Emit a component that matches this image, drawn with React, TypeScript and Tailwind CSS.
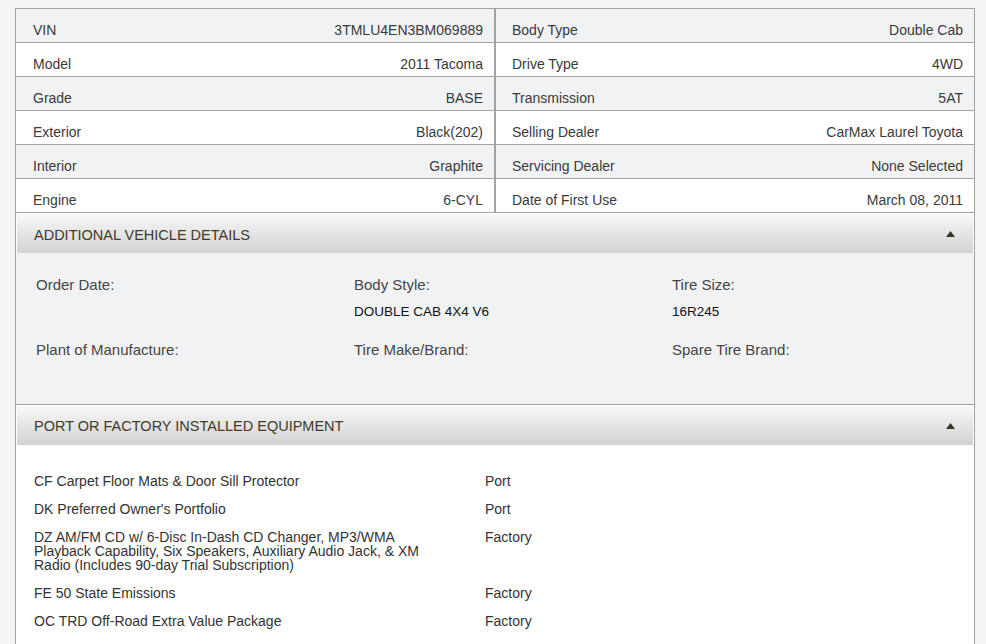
const leftRows = [
  ["VIN", "3TMLU4EN3BM069889"],
  ["Model", "2011 Tacoma"],
  ["Grade", "BASE"],
  ["Exterior", "Black(202)"],
  ["Interior", "Graphite"],
  ["Engine", "6-CYL"],
];

const rightRows = [
  ["Body Type", "Double Cab"],
  ["Drive Type", "4WD"],
  ["Transmission", "5AT"],
  ["Selling Dealer", "CarMax Laurel Toyota"],
  ["Servicing Dealer", "None Selected"],
  ["Date of First Use", "March 08, 2011"],
];

const details = [
  { label: "Order Date:", value: "" },
  { label: "Body Style:", value: "DOUBLE CAB 4X4 V6" },
  { label: "Tire Size:", value: "16R245" },
  { label: "Plant of Manufacture:", value: "" },
  { label: "Tire Make/Brand:", value: "" },
  { label: "Spare Tire Brand:", value: "" },
];

const equipment = [
  ["CF Carpet Floor Mats & Door Sill Protector", "Port"],
  ["DK Preferred Owner's Portfolio", "Port"],
  [
    "DZ AM/FM CD w/ 6-Disc In-Dash CD Changer, MP3/WMA Playback Capability, Six Speakers, Auxiliary Audio Jack, & XM Radio (Includes 90-day Trial Subscription)",
    "Factory",
  ],
  ["FE 50 State Emissions", "Factory"],
  ["OC TRD Off-Road Extra Value Package", "Factory"],
];

function SpecColumn({ rows, side }: { rows: string[][]; side: "left" | "right" }) {
  return (
    <div
      className={
        side === "left"
          ? "w-[479px] border-r border-[#a3a3a3]"
          : "flex-1 border-l border-[#a3a3a3]"
      }
    >
      {rows.map(([label, value], i) => (
        <div
          key={label}
          className={`flex h-[34px] justify-between border-b border-[#a3a3a3] pt-[13px] pr-[11px] text-[14px] leading-[16px] text-[#3a3a3a] ${
            side === "left" ? "pl-[17px]" : "pl-[16px]"
          } ${i % 2 === 0 ? "bg-[#f1f2f3]" : "bg-white"}`}
        >
          <span>{label}</span>
          <span>{value}</span>
        </div>
      ))}
    </div>
  );
}

function SectionHeader({ title, lower }: { title: string; lower?: boolean }) {
  return (
    <div
      className={`mx-[1px] mt-[1px] flex h-[39px] items-center justify-between bg-linear-to-b from-[#f8f8f8] to-[#d2d2d2] pl-[17px] pr-[18px] ${
        lower ? "pt-[5px]" : "pt-[2px]"
      }`}
    >
      <span className="text-[14.5px] uppercase text-[#403b2a]">{title}</span>
      <svg width="9" height="6" viewBox="0 0 9 6" className={lower ? "-mt-[5px]" : "-mt-[2px]"}>
        <path d="M0 6 L4.5 0 L9 6 Z" fill="#38331f" />
      </svg>
    </div>
  );
}

export default function App() {
  return (
    <div
      className="min-h-screen bg-[#f4f4f4] pt-[8px]"
      style={{ fontFamily: '"Liberation Sans", Arial, Helvetica, sans-serif' }}
    >
      <div className="ml-[15px] w-[960px] border-x border-t border-[#a3a3a3] bg-white">
        <div className="flex">
          <SpecColumn rows={leftRows} side="left" />
          <SpecColumn rows={rightRows} side="right" />
        </div>

        <SectionHeader title="Additional Vehicle Details" lower />
        <div className="grid grid-cols-[318px_318px_1fr] gap-y-[19px] border-b border-[#a3a3a3] bg-[#f1f2f3] pt-[22px] pb-[18px] pl-[20px]">
          {details.map((d) => (
            <div key={d.label}>
              <div className="h-[20px] text-[15px] leading-[20px] text-[#454545]">{d.label}</div>
              <div className="mt-[8px] h-[18px] text-[13.5px] leading-[18px] text-[#111]">{d.value}</div>
            </div>
          ))}
        </div>

        <SectionHeader title="Port or Factory Installed Equipment" />
        <div className="grid grid-cols-[410px_1fr] gap-x-[41px] gap-y-[14px] pt-[29px] pb-[20px] pl-[18px] text-[14px] leading-[14px] text-[#333]">
          {equipment.map(([desc, source]) => (
            <div key={desc} className="contents">
              <div>{desc}</div>
              <div>{source}</div>
            </div>
          ))}
        </div>
      </div>
    </div>
  );
}
